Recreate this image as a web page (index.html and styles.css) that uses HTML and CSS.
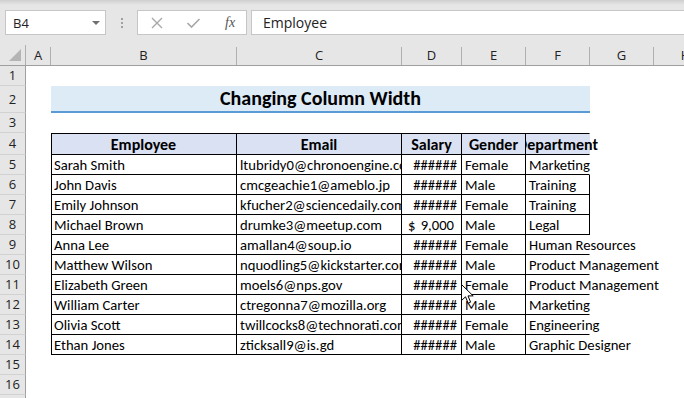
FILE: index.html
```html
<!DOCTYPE html>
<html>
<head>
  <meta charset="UTF-8">
  <title>Changing Column Width</title>
  <link rel="stylesheet" href="styles.css">
</head>
<body>
<div class="toolbar">
  <div class="name-box">
    <span>B4</span>
    <span class="drop"></span>
  </div>
  <div class="dots"><i></i><i></i><i></i></div>
  <div class="fx-box">
    <svg width="14" height="14" viewBox="0 0 14 14"><path d="M2 2 L12 12 M12 2 L2 12" stroke="#a8a8a8" stroke-width="1.4" fill="none"/></svg>
    <svg width="15" height="14" viewBox="0 0 15 14"><path d="M1.5 7 L5.5 11 L13.5 3" stroke="#a8a8a8" stroke-width="1.6" fill="none"/></svg>
    <span class="fx">fx</span>
  </div>
  <div class="formula">Employee</div>
</div>

<div class="sheet">
  <div class="row col-head">
    <div class="corner"><span class="tri"></span></div>
    <div class="ch">A</div>
    <div class="ch">B</div>
    <div class="ch">C</div>
    <div class="ch">D</div>
    <div class="ch">E</div>
    <div class="ch">F</div>
    <div class="ch">G</div>
    <div class="ch">H</div>
  </div>

  <div class="row"><div class="rh">1</div></div>

  <div class="row r2">
    <div class="rh">2</div><div></div>
    <div class="title">Changing Column Width</div>
  </div>

  <div class="row"><div class="rh">3</div></div>

  <div class="row r4">
    <div class="rh">4</div><div></div>
    <div class="t hd first">Employee</div>
    <div class="t hd">Email</div>
    <div class="t hd">Salary</div>
    <div class="t hd">Gender</div>
    <div class="t hd dept spill"><span>Department</span></div>
  </div>

  <div class="row">
    <div class="rh">5</div><div></div>
    <div class="t first">Sarah Smith</div>
    <div class="t">ltubridy0@chronoengine.com</div>
    <div class="t num">######</div>
    <div class="t">Female</div>
    <div class="t spill">Marketing</div>
  </div>

  <div class="row">
    <div class="rh">6</div><div></div>
    <div class="t first">John Davis</div>
    <div class="t">cmcgeachie1@ameblo.jp</div>
    <div class="t num">######</div>
    <div class="t">Male</div>
    <div class="t">Training</div>
  </div>

  <div class="row">
    <div class="rh">7</div><div></div>
    <div class="t first">Emily Johnson</div>
    <div class="t">kfucher2@sciencedaily.com</div>
    <div class="t num">######</div>
    <div class="t">Female</div>
    <div class="t">Training</div>
  </div>

  <div class="row">
    <div class="rh">8</div><div></div>
    <div class="t first">Michael Brown</div>
    <div class="t">drumke3@meetup.com</div>
    <div class="t acct"><span>$</span><span>9,000</span></div>
    <div class="t">Male</div>
    <div class="t">Legal</div>
  </div>

  <div class="row">
    <div class="rh">9</div><div></div>
    <div class="t first">Anna Lee</div>
    <div class="t">amallan4@soup.io</div>
    <div class="t num">######</div>
    <div class="t">Female</div>
    <div class="t spill">Human Resources</div>
  </div>

  <div class="row">
    <div class="rh">10</div><div></div>
    <div class="t first">Matthew Wilson</div>
    <div class="t">nquodling5@kickstarter.com</div>
    <div class="t num">######</div>
    <div class="t">Male</div>
    <div class="t spill">Product Management</div>
  </div>

  <div class="row">
    <div class="rh">11</div><div></div>
    <div class="t first">Elizabeth Green</div>
    <div class="t">moels6@nps.gov</div>
    <div class="t num">######</div>
    <div class="t">Female</div>
    <div class="t spill">Product Management</div>
  </div>

  <div class="row">
    <div class="rh">12</div><div></div>
    <div class="t first">William Carter</div>
    <div class="t">ctregonna7@mozilla.org</div>
    <div class="t num">######</div>
    <div class="t">Male</div>
    <div class="t spill">Marketing</div>
  </div>

  <div class="row">
    <div class="rh">13</div><div></div>
    <div class="t first">Olivia Scott</div>
    <div class="t">twillcocks8@technorati.com</div>
    <div class="t num">######</div>
    <div class="t">Female</div>
    <div class="t spill">Engineering</div>
  </div>

  <div class="row">
    <div class="rh">14</div><div></div>
    <div class="t first">Ethan Jones</div>
    <div class="t">zticksall9@is.gd</div>
    <div class="t num">######</div>
    <div class="t">Male</div>
    <div class="t spill">Graphic Designer</div>
  </div>

  <div class="row"><div class="rh">15</div></div>
  <div class="row"><div class="rh">16</div></div>
  <div class="row"><div class="rh">17</div></div>
</div>

<!-- mouse pointer over column E -->
<svg class="pointer" width="13" height="21" viewBox="0 0 13 21">
  <path d="M0.5 0.5 L0.5 16.5 L4.5 12.8 L7.2 19.2 L9.6 18.2 L7 11.9 L12.2 11.9 Z" fill="#fff" stroke="#000" stroke-width="1"/>
</svg>
</body>
</html>
```

FILE: styles.css
```css
* {
  box-sizing: border-box;
}

body {
  margin: 0;
  width: 684px;
  height: 398px;
  overflow: hidden;
  position: relative;
  background: #fff;
  font-family: Carlito, Calibri, Lato, "Liberation Sans", sans-serif;
  color: #000;
}

/* formula bar */
.toolbar {
  height: 45px;
  display: flex;
  align-items: flex-start;
  padding: 10px 0 0 5px;
  background: linear-gradient(#cfcfcf, #e6e6e6 5px);
  font-family: "Open Sans", "Noto Sans", sans-serif;
  font-size: 13px;
  color: #222;
}

.name-box {
  width: 101px;
  height: 25px;
  background: #fff;
  border: 1px solid #c6c6c6;
  display: flex;
  align-items: center;
  justify-content: space-between;
  padding: 0 5px 0 7px;
}

.drop {
  width: 0;
  height: 0;
  border-left: 4px solid transparent;
  border-right: 4px solid transparent;
  border-top: 4px solid #707070;
}

.dots {
  width: 31px;
  height: 25px;
  display: flex;
  flex-direction: column;
  align-items: center;
  justify-content: center;
  gap: 2px;
}

.dots i {
  width: 2px;
  height: 2px;
  background: #a0a0a0;
}

.fx-box {
  width: 110px;
  height: 25px;
  background: #fff;
  border: 1px solid #c6c6c6;
  display: flex;
  align-items: center;
  padding-left: 12px;
  gap: 22px;
}

.fx {
  font-family: "Liberation Serif", serif;
  font-style: italic;
  font-size: 14px;
  color: #555;
  margin-left: 2px;
}

.formula {
  flex: 1;
  height: 25px;
  margin-left: 4px;
  background: #fff;
  border: 1px solid #c6c6c6;
  border-right: none;
  padding-left: 11px;
  font-size: 14px;
  line-height: 23px;
}

/* sheet grid */
.row {
  display: grid;
  grid-template-columns: 26px 25px 186px 165px 60px 64px 64px 64px 64px;
  height: 20px;
  font-size: 14.67px;
}

.row > div {
  white-space: nowrap;
}

.col-head {
  height: 21px;
  background: #e6e6e6;
  border-bottom: 1px solid #9f9f9f;
  font-family: "Open Sans", "Noto Sans", sans-serif;
  font-size: 13px;
  color: #222;
}

.corner {
  border-right: 1px solid #b0b0b0;
  position: relative;
}

.tri {
  position: absolute;
  right: 4px;
  bottom: 4px;
  width: 0;
  height: 0;
  border-left: 12px solid transparent;
  border-bottom: 12px solid #b4b4b4;
}

.ch {
  margin-top: 2px;
  border-right: 1px solid #b0b0b0;
  text-align: center;
  line-height: 17px;
}

.rh {
  background: #e6e6e6;
  border-right: 1px solid #9f9f9f;
  border-bottom: 1px solid #d2d2d2;
  font-family: "Open Sans", "Noto Sans", sans-serif;
  font-size: 13px;
  color: #222;
  text-align: center;
  line-height: 19px;
}

.r2 {
  height: 27px;
}

.r2 .rh {
  line-height: 26px;
}

.title {
  grid-column: 3 / 8;
  background: #ddebf7;
  border-bottom: 2px solid #5b9bd5;
  text-align: center;
  font-weight: bold;
  font-size: 20px;
  line-height: 25px;
}

.r4 {
  height: 22px;
}

.r4 .rh {
  line-height: 21px;
}

/* table cells */
.t {
  border-right: 1px solid #000;
  border-bottom: 1px solid #000;
  padding: 0 3px;
  overflow: hidden;
  display: flex;
  align-items: center;
}

.first {
  border-left: 1px solid #000;
  padding-left: 2px;
}

.hd {
  border-top: 1px solid #000;
  background: #d9e1f2;
  font-weight: bold;
  font-size: 16px;
  justify-content: center;
}

.num {
  justify-content: flex-end;
  padding-right: 4px;
}

.acct {
  justify-content: space-between;
  padding: 0 7px 0 6px;
}

.spill {
  overflow: visible;
  border-right-color: transparent;
}

.dept {
  clip-path: inset(0 -120px 0 0);
}

.pointer {
  position: absolute;
  left: 461px;
  top: 284px;
}
```
